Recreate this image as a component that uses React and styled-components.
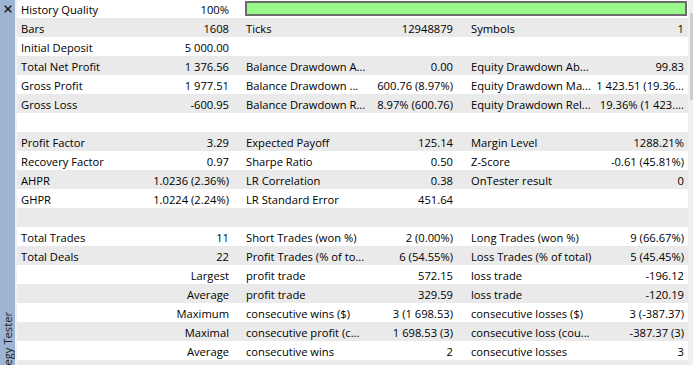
import React from "react";
import styled, { createGlobalStyle } from "styled-components";

const Global = createGlobalStyle`
  html, body { margin: 0; padding: 0; background: #ffffff; overflow: hidden; }
  * { box-sizing: border-box; }
`;

const Window = styled.div`
  display: flex;
  width: 693px;
  height: 365px;
  overflow: hidden;
  background: #ffffff;
  font-family: "Open Sans", "Noto Sans", "Liberation Sans", sans-serif;
  font-size: 11.2px;
  color: #000000;
`;

const Strip = styled.div`
  flex: 0 0 17px;
  display: flex;
  flex-direction: column;
  align-items: flex-start;
  background: #9db5d3;
  border-right: 2px solid #eef1f5;
  overflow: hidden;
`;

const CloseButton = styled.svg`
  display: block;
  margin: 5px 0 0 4px;
  flex: 0 0 auto;
`;

const VerticalLabel = styled.div`
  margin-top: auto;
  margin-bottom: -25px;
  margin-left: 1px;
  writing-mode: vertical-rl;
  transform: rotate(180deg);
  line-height: 14px;
  white-space: nowrap;
  color: #1b1b1b;
`;

const Table = styled.div`
  flex: 1 1 auto;
  display: flex;
  flex-direction: column;
  margin-top: -1px;
  overflow: hidden;
`;

const Row = styled.div`
  display: grid;
  grid-template-columns: 118px 102px 135px 89px 131px 96px;
  flex: 0 0 19px;
  height: 19px;
  line-height: 19px;
  background: ${(p) => (p.$alt ? "#eaeaea" : "#ffffff")};
`;

const labelPad = { 1: 4, 2: 9, 3: 10 };
const valuePad = { 1: 8, 2: 8, 3: 4 };

const Label = styled.div`
  padding-left: ${(p) => labelPad[p.$col]}px;
  padding-top: 1px;
  white-space: nowrap;
  overflow: hidden;
`;

const Value = styled.div`
  padding-right: ${(p) => valuePad[p.$col]}px;
  padding-top: 1px;
  text-align: right;
  white-space: nowrap;
  overflow: hidden;
`;

const QualityBar = styled.div`
  grid-column: 3 / 7;
  align-self: start;
  height: 15px;
  margin: 2px 1px 0 8px;
  background: #98f98a;
  border: 2px solid #6c6c6c;
`;

const Scrollbar = styled.div`
  flex: 0 0 5px;
  display: flex;
  justify-content: flex-end;
  background: #f0f0f0;
`;

const Thumb = styled.div`
  width: 3px;
  height: 87px;
  margin-top: 13px;
  background: #cdcdcd;
`;

const rows = [
  null,
  ["Bars", "1608", "Ticks", "12948879", "Symbols", "1"],
  ["Initial Deposit", "5 000.00", "", "", "", ""],
  ["Total Net Profit", "1 376.56", "Balance Drawdown A...", "0.00", "Equity Drawdown Ab...", "99.83"],
  ["Gross Profit", "1 977.51", "Balance Drawdown ...", "600.76 (8.97%)", "Equity Drawdown Ma...", "1 423.51 (19.36..."],
  ["Gross Loss", "-600.95", "Balance Drawdown R...", "8.97% (600.76)", "Equity Drawdown Rel...", "19.36% (1 423...."],
  ["", "", "", "", "", ""],
  ["Profit Factor", "3.29", "Expected Payoff", "125.14", "Margin Level", "1288.21%"],
  ["Recovery Factor", "0.97", "Sharpe Ratio", "0.50", "Z-Score", "-0.61 (45.81%)"],
  ["AHPR", "1.0236 (2.36%)", "LR Correlation", "0.38", "OnTester result", "0"],
  ["GHPR", "1.0224 (2.24%)", "LR Standard Error", "451.64", "", ""],
  ["", "", "", "", "", ""],
  ["Total Trades", "11", "Short Trades (won %)", "2 (0.00%)", "Long Trades (won %)", "9 (66.67%)"],
  ["Total Deals", "22", "Profit Trades (% of to...", "6 (54.55%)", "Loss Trades (% of total)", "5 (45.45%)"],
  ["", "Largest", "profit trade", "572.15", "loss trade", "-196.12"],
  ["", "Average", "profit trade", "329.59", "loss trade", "-120.19"],
  ["", "Maximum", "consecutive wins ($)", "3 (1 698.53)", "consecutive losses ($)", "3 (-387.37)"],
  ["", "Maximal", "consecutive profit (c...", "1 698.53 (3)", "consecutive loss (cou...", "-387.37 (3)"],
  ["", "Average", "consecutive wins", "2", "consecutive losses", "3"],
  ["", "", "", "", "", ""],
];

export default function App() {
  return (
    <>
      <Global />
      <Window>
        <Strip>
          <CloseButton width="8" height="8" viewBox="0 0 8 8">
            <path d="M0.7 0.7 L7.3 7.3 M7.3 0.7 L0.7 7.3" stroke="#1e1e1e" strokeWidth="1.6" fill="none" />
          </CloseButton>
          <VerticalLabel>Strategy Tester</VerticalLabel>
        </Strip>
        <Table>
          {rows.map((r, i) =>
            r === null ? (
              <Row key={i} $alt={false}>
                <Label $col={1}>History Quality</Label>
                <Value $col={1}>100%</Value>
                <QualityBar />
              </Row>
            ) : (
              <Row key={i} $alt={i % 2 === 1}>
                <Label $col={1}>{r[0]}</Label>
                <Value $col={1}>{r[1]}</Value>
                <Label $col={2}>{r[2]}</Label>
                <Value $col={2}>{r[3]}</Value>
                <Label $col={3}>{r[4]}</Label>
                <Value $col={3}>{r[5]}</Value>
              </Row>
            )
          )}
        </Table>
        <Scrollbar>
          <Thumb />
        </Scrollbar>
      </Window>
    </>
  );
}
